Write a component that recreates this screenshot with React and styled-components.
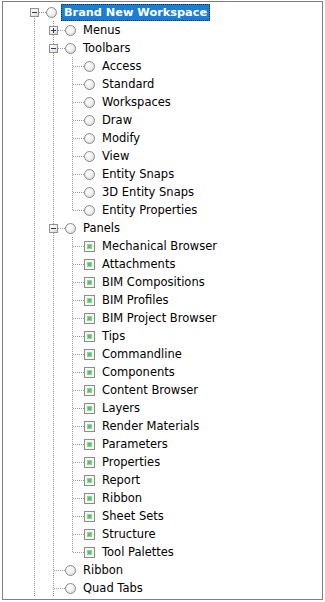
import React from 'react';
import styled, { createGlobalStyle, css } from 'styled-components';

const GlobalStyle = createGlobalStyle`
  html, body {
    margin: 0;
    padding: 0;
    background: #ffffff;
    overflow: hidden;
  }
  body {
    font-family: "DejaVu Sans", Verdana, sans-serif;
  }
`;

const dotsV = 'repeating-linear-gradient(to bottom, #9a9a9a 0 1px, transparent 1px 2px)';
const dotsH = 'repeating-linear-gradient(to right, #9a9a9a 0 1px, transparent 1px 2px)';

const Frame = styled.div`
  box-sizing: border-box;
  width: 321px;
  height: 599px;
  margin: 1px 0 0 2px;
  border: 1px solid #7f7f7f;
  background: #fff;
  overflow: hidden;
  padding-top: 1px;
`;

const Row = styled.div`
  display: flex;
  align-items: center;
  height: 18px;
  padding-left: 22px;
`;

const Guide = styled.div`
  position: relative;
  width: 19px;
  height: 18px;
  flex-shrink: 0;
  ${(p) =>
    p.$line &&
    css`
      &::before {
        content: '';
        position: absolute;
        left: 9px;
        top: 0;
        width: 1px;
        height: 18px;
        background: ${dotsV};
      }
    `}
`;

const Connector = styled.div`
  position: relative;
  width: 19px;
  height: 18px;
  flex-shrink: 0;

  &::before {
    content: '';
    position: absolute;
    left: 9px;
    width: 1px;
    top: ${(p) => (p.$top ? '0' : '9px')};
    height: ${(p) => (p.$top && p.$bottom ? '18px' : p.$top || p.$bottom ? '9px' : '0')};
    background: ${dotsV};
  }

  &::after {
    content: '';
    position: absolute;
    left: 10px;
    top: 9px;
    width: 11px;
    height: 1px;
    background: ${dotsH};
  }
`;

const Expander = styled.span`
  position: absolute;
  z-index: 1;
  left: 5px;
  top: 5px;
  box-sizing: border-box;
  width: 9px;
  height: 9px;
  border: 1px solid #919191;
  background: linear-gradient(135deg, #ffffff 0%, #f0f0f0 50%, #d6d6d6 100%);

  &::before {
    content: '';
    position: absolute;
    left: 1px;
    top: 3px;
    width: 5px;
    height: 1px;
    background: #2b3a55;
  }

  ${(p) =>
    !p.$open &&
    css`
      &::after {
        content: '';
        position: absolute;
        left: 3px;
        top: 1px;
        width: 1px;
        height: 5px;
        background: #2b3a55;
      }
    `}
`;

const NodeIcon = styled.span`
  position: relative;
  box-sizing: border-box;
  flex-shrink: 0;
  margin-left: 2px;
  width: 11px;
  height: 11px;

  ${(p) =>
    p.$kind === 'check'
      ? css`
          border: 1px solid #8c8c8c;
          background: #f6f6f6;
          &::after {
            content: '';
            position: absolute;
            left: 2px;
            top: 2px;
            width: 5px;
            height: 5px;
            box-sizing: border-box;
            background: #5dc264;
            border: 1px solid #8fd694;
          }
        `
      : css`
          border: 1px solid #8a8a8a;
          border-radius: 50%;
          background: radial-gradient(circle at 40% 35%, #ffffff 0%, #f2f2f2 45%, #cfcfcf 100%);
        `}
`;

const Label = styled.span`
  margin-left: 4px;
  padding: 0 2px;
  height: 17px;
  line-height: 15px;
  box-sizing: border-box;
  font-size: 11.5px;
  color: #000;
  white-space: nowrap;
  border: 1px solid transparent;

  ${(p) =>
    p.$selected &&
    css`
      background: #1a7ed4;
      color: #fff;
      font-weight: bold;
      font-size: 11.3px;
      border: 1px dotted #1c2a3a;
    `}
`;

const leaf = (label, kind = 'radio') => ({ label, kind });

const tree = [
  {
    label: 'Brand New Workspace',
    selected: true,
    open: true,
    moreBelow: true,
    children: [
      { label: 'Menus', open: false, children: [] },
      {
        label: 'Toolbars',
        open: true,
        children: [
          'Access',
          'Standard',
          'Workspaces',
          'Draw',
          'Modify',
          'View',
          'Entity Snaps',
          '3D Entity Snaps',
          'Entity Properties',
        ].map((l) => leaf(l)),
      },
      {
        label: 'Panels',
        open: true,
        children: [
          'Mechanical Browser',
          'Attachments',
          'BIM Compositions',
          'BIM Profiles',
          'BIM Project Browser',
          'Tips',
          'Commandline',
          'Components',
          'Content Browser',
          'Layers',
          'Render Materials',
          'Parameters',
          'Properties',
          'Report',
          'Ribbon',
          'Sheet Sets',
          'Structure',
          'Tool Palettes',
        ].map((l) => leaf(l, 'check')),
      },
      leaf('Ribbon'),
      { ...leaf('Quad Tabs'), moreBelow: true },
    ],
  },
];

// flatten the tree into rows, remembering which ancestor columns keep a line
const flatten = (nodes, guides = [], depth = 0, out = []) => {
  nodes.forEach((node, i) => {
    const hasNext = i < nodes.length - 1 || node.moreBelow;
    out.push({ node, guides, depth, top: depth > 0, bottom: hasNext });
    if (node.children && node.open) {
      flatten(node.children, [...guides, hasNext], depth + 1, out);
    }
  });
  return out;
};

const TreeRow = ({ row }) => {
  const { node, guides, top, bottom } = row;
  const expandable = Array.isArray(node.children);
  return (
    <Row>
      {guides.map((line, i) => (
        <Guide key={i} $line={line} />
      ))}
      <Connector $top={top} $bottom={bottom}>
        {expandable && <Expander $open={node.open} />}
      </Connector>
      <NodeIcon $kind={node.kind || 'radio'} />
      <Label $selected={node.selected}>{node.label}</Label>
    </Row>
  );
};

const App = () => {
  const rows = flatten(tree);
  return (
    <>
      <GlobalStyle />
      <Frame>
        {rows.map((row, i) => (
          <TreeRow key={i} row={row} />
        ))}
      </Frame>
    </>
  );
};

export default App;
